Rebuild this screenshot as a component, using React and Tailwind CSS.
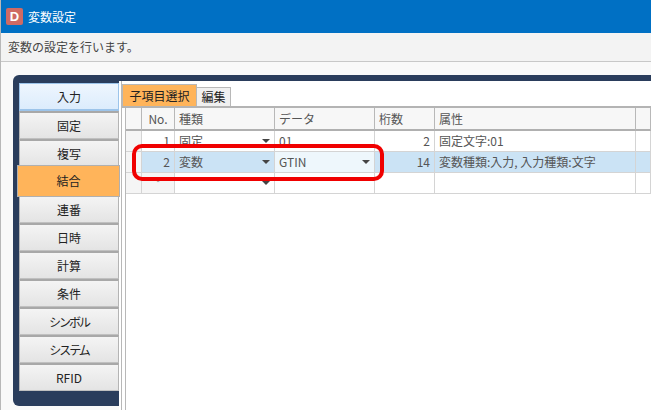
const FONT = { fontFamily: '"Noto Sans CJK JP", sans-serif' };

function Caret() {
  return <span className="ml-auto w-0 h-0 border-l-[4px] border-r-[4px] border-t-[4px] border-l-transparent border-r-transparent border-t-[#444444]" />;
}

const NAV = ["入力", "固定", "複写", "結合", "連番", "日時", "計算", "条件", "シンボル", "システム", "RFID"];

function NavButton({ label, index }) {
  const kana = label === "シンボル" || label === "システム";
  if (label === "結合") {
    return (
      <div className="h-[32px] -my-[2px] -ml-[2px] w-[103px] relative z-10 shrink-0 flex items-center justify-center bg-[#ffb45a] border border-[#b0b0b0] text-[12px] text-[#222]">
        {label}
      </div>
    );
  }
  if (index === 0) {
    return (
      <div className="h-[28px] w-[100px] shrink-0 flex items-center justify-center bg-gradient-to-b from-[#eef6fe] to-[#dcecfc] border border-b-2 border-[#9cc4ea] text-[12px] text-[#222]">
        {label}
      </div>
    );
  }
  return (
    <div className={`h-[28px] w-[100px] shrink-0 flex items-center justify-center bg-gradient-to-b from-[#f4f4f4] to-[#e4e4e4] border-x border-t-2 border-b border-x-[#b4b4b4] border-t-[#a8a8a8] border-b-[#c0c0c0] text-[12px] text-[#222] ${kana ? "tracking-[-2px]" : ""}`}>
      {label}
    </div>
  );
}

const COLS = ["w-[16px]", "w-[33px]", "w-[100px]", "w-[100px]", "w-[60px]", "w-[201px]", "flex-1"];

function Row({ bg, cells, h = "h-[21px]", header }) {
  const base = header
    ? "bg-[#f7f7f7] border-r border-b-2 border-r-[#b8b8b8] border-b-[#b0b0b0] text-[#555]"
    : "border-r border-b border-r-[#d4d4d4] border-b-[#d4d4d4] text-[#555]";
  return (
    <div className={`flex ${h} text-[12px] leading-none`}>
      {cells.map((c, i) => (
        <div
          key={i}
          className={`${COLS[i]} shrink-0 ${i === 6 ? "min-w-0" : ""} flex items-center px-[4px] overflow-hidden ${base} ${c.cls || ""} ${!c.cls && bg ? bg : ""}`}
        >
          {c.content}
        </div>
      ))}
    </div>
  );
}

export default function App() {
  return (
    <div style={FONT} className="relative w-[651px] h-[410px] overflow-hidden flex flex-col bg-[#f9f9f9] border-l border-[#b8b8b8]">
      <div className="h-[33px] shrink-0 bg-[#0070c4] flex items-center pl-[5px] gap-[5px] text-white text-[12px]">
        <div className="w-[17px] h-[17px] rounded-[2px] bg-[#cf6a64] flex items-center justify-center text-white font-bold text-[13px] leading-none" style={{ fontFamily: '"Liberation Sans", sans-serif' }}>D</div>
        <span>変数設定</span>
      </div>
      <div className="h-[29px] shrink-0 bg-[#f3f3f3] border-b border-[#c8c8c8] flex items-center pl-[7px] text-[12px] text-[#444]">
        変数の設定を行います。
      </div>
      <div className="flex-1 min-h-0 pt-[13px] pb-[4px] pl-[12px]">
        <div className="h-full bg-[#2a3d5c] rounded-l-[6px] flex pl-[6px] pt-[6px]">
          <div className="flex flex-col w-[100px] shrink-0 pt-[2px]">
            {NAV.map((n, i) => <NavButton key={n} label={n} index={i} />)}
          </div>
          <div className="flex-1 min-w-0 -mb-[4px] bg-white flex">
            <div className="w-[3px] shrink-0 bg-white border-r border-[#b8b8b8]" />
            <div className="flex-1 min-w-0 flex flex-col pt-[3px]">
              <div className="flex items-end h-[22px] pl-0">
                <div className="h-[22px] w-[75px] flex items-center justify-center bg-[#ffb45a] border border-[#b8b8b8] border-b-0 text-[12px] text-[#222]">子項目選択</div>
                <div className="h-[19px] w-[34px] flex items-center justify-center bg-[#f0f0f0] border border-l-0 border-[#b8b8b8] border-b-0 text-[12px] text-[#222]">編集</div>
              </div>
              <div className="border-t-2 border-[#b4b4b4] flex-1 min-h-0 pl-[3px]">
                <div className="border-l border-[#b8b8b8] h-full">
                  <Row
                    header
                    h="h-[23px]"
                    cells={[
                      { content: "" },
                      { content: <span className="mx-auto">No.</span> },
                      { content: "種類" },
                      { content: "データ" },
                      { content: "桁数" },
                      { content: "属性" },
                      { content: "" },
                    ]}
                  />
                  <Row
                    cells={[
                      { content: "", cls: "bg-[#f5f5f5]" },
                      { content: <span className="ml-auto">1</span> },
                      { content: <><span>固定</span><Caret /></> },
                      { content: "01" },
                      { content: <span className="ml-auto">2</span> },
                      { content: "固定文字:01" },
                      { content: "" },
                    ]}
                  />
                  <Row
                    bg="bg-[#cbe3f5]"
                    cells={[
                      { content: <span className="flex flex-col gap-[2px] ml-[5px]"><span className="w-[1px] h-[1px] bg-[#333]" /><span className="w-[1px] h-[1px] bg-[#333]" /><span className="w-[1px] h-[1px] bg-[#333]" /></span>, cls: "bg-[#f5f5f5]" },
                      { content: <span className="ml-auto">2</span> },
                      { content: <><span>変数</span><Caret /></> },
                      { content: <><span>GTIN</span><Caret /></>, cls: "bg-[#eef7fc]" },
                      { content: <span className="ml-auto">14</span> },
                      { content: "変数種類:入力, 入力種類:文字" },
                      { content: "" },
                    ]}
                  />
                  <Row
                    cells={[
                      { content: "", cls: "bg-[#f5f5f5]" },
                      { content: <span className="mx-auto text-[#888] text-[10px]">*</span>, cls: "bg-[#f5f5f5]" },
                      { content: <Caret /> },
                      { content: "" },
                      { content: "" },
                      { content: "" },
                      { content: "" },
                    ]}
                  />
                </div>
              </div>
            </div>
          </div>
        </div>
      </div>
      <div className="absolute left-[131px] top-[144px] w-[252px] h-[37px] rounded-[10px] border-[4px] border-[#f00000]" />
    </div>
  );
}
